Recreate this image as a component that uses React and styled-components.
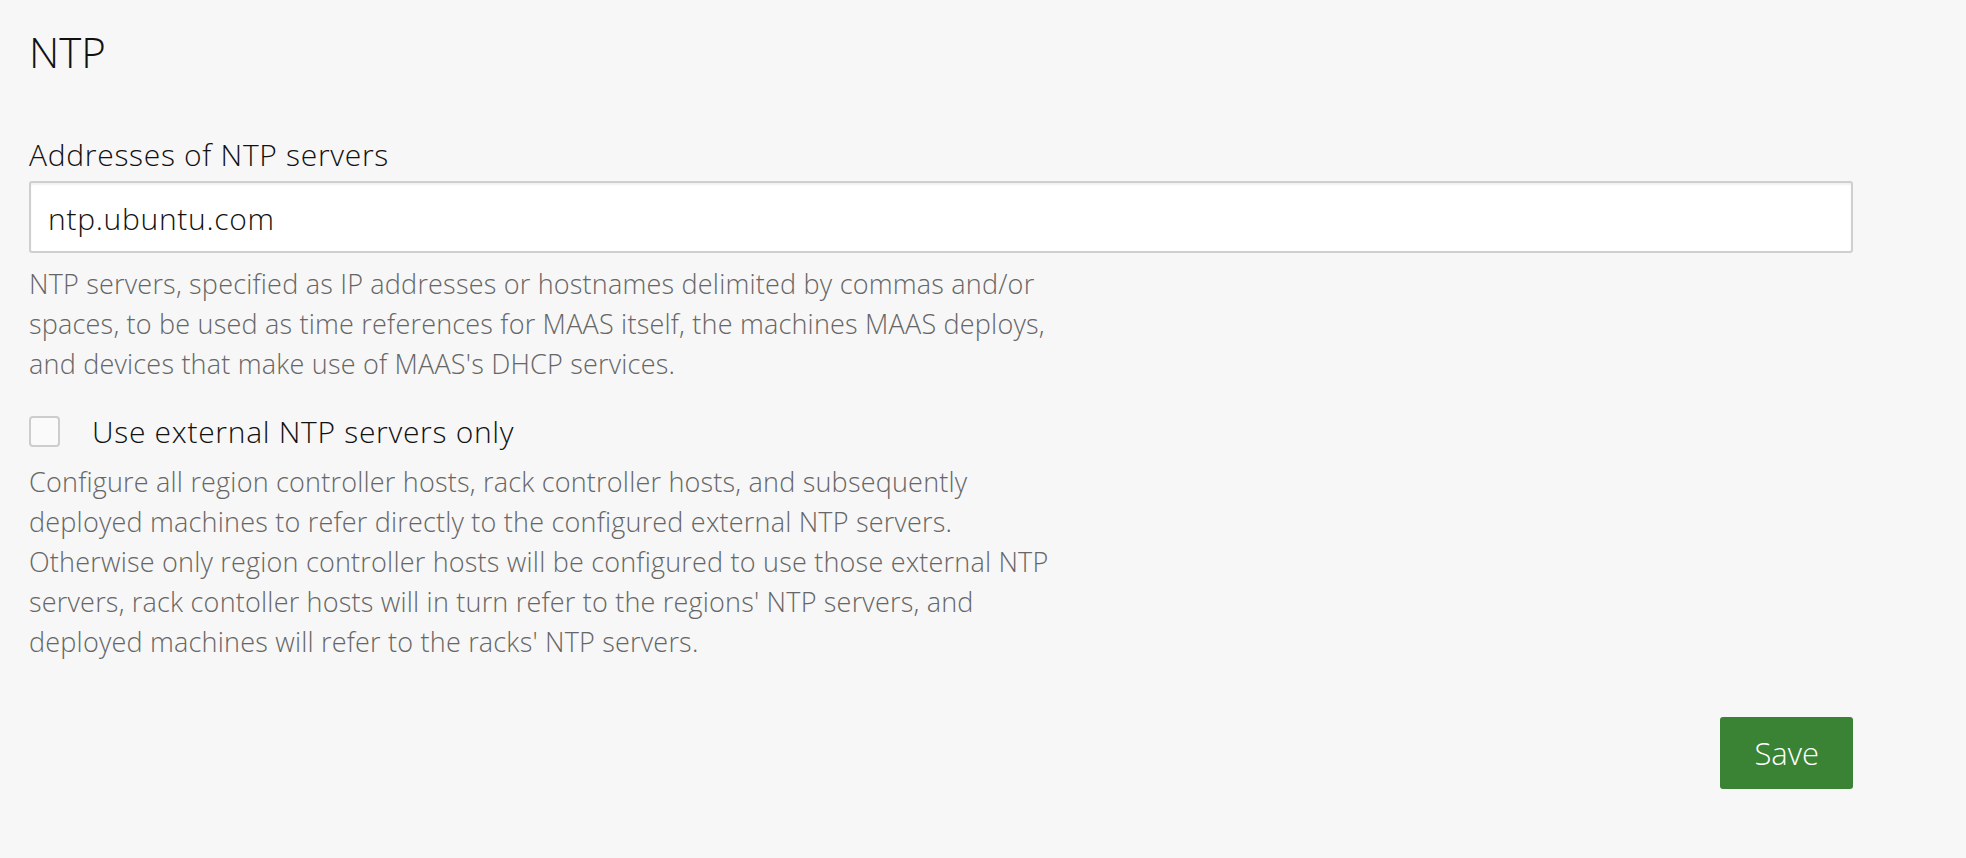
import React from "react"
import styled, { createGlobalStyle } from "styled-components"

const GlobalStyle = createGlobalStyle`
  html, body {
    margin: 0;
    padding: 0;
    background: #f7f7f7;
  }
  body {
    font-family: "Open Sans", Lato, sans-serif;
    font-weight: 300;
    color: #111;
  }
  * {
    box-sizing: border-box;
  }
`

const App = () => (
  <>
    <GlobalStyle />
    <Page>
      <Title>NTP</Title>
      <Form>
        <Label htmlFor="ntp-servers">Addresses of NTP servers</Label>
        <TextInput id="ntp-servers" type="text" defaultValue="ntp.ubuntu.com" />
        <HelpText>
          NTP servers, specified as IP addresses or hostnames delimited by commas and/or
          spaces, to be used as time references for MAAS itself, the machines MAAS deploys,
          and devices that make use of MAAS's DHCP services.
        </HelpText>

        <CheckboxRow>
          <Checkbox type="checkbox" id="external-only" />
          <CheckboxLabel htmlFor="external-only">Use external NTP servers only</CheckboxLabel>
        </CheckboxRow>
        <HelpText $tight>
          Configure all region controller hosts, rack controller hosts, and subsequently
          deployed machines to refer directly to the configured external NTP servers.
          Otherwise only region controller hosts will be configured to use those external NTP
          servers, rack contoller hosts will in turn refer to the regions' NTP servers, and
          deployed machines will refer to the racks' NTP servers.
        </HelpText>

        <Actions>
          <SaveButton type="button">Save</SaveButton>
        </Actions>
      </Form>
    </Page>
  </>
)

export default App

const Page = styled.main`
  padding: 27px 113px 40px 29px;
`

const Title = styled.h2`
  margin: 0;
  font-size: 42px;
  line-height: 50px;
  font-weight: 300;
  color: #111;
`

const Form = styled.form`
  display: flex;
  flex-direction: column;
  margin-top: 60px;
`

const Label = styled.label`
  font-size: 30px;
  line-height: 36px;
  letter-spacing: 0.7px;
  color: #111;
  margin-bottom: 8px;
`

const TextInput = styled.input`
  width: 100%;
  height: 72px;
  padding: 3px 17px 0;
  font-family: inherit;
  font-weight: 300;
  font-size: 30px;
  letter-spacing: 0.7px;
  color: #111;
  background: #fff;
  border: 2px solid #cfcfcf;
  border-radius: 3px;
  box-shadow: inset 0 2px 2px rgba(0, 0, 0, 0.06);
  outline: none;
`

const HelpText = styled.p`
  max-width: 1050px;
  margin: ${props => (props.$tight ? "15px" : "11px")} 0 0;
  font-size: 27px;
  line-height: 40px;
  letter-spacing: 0.2px;
  color: #666;
`

const CheckboxRow = styled.div`
  display: flex;
  align-items: center;
  gap: 32px;
  margin-top: 32px;
  height: 31px;
`

const Checkbox = styled.input`
  appearance: none;
  width: 31px;
  height: 31px;
  margin: 0;
  background: #fafafa;
  border: 2px solid #cdcdcd;
  border-radius: 4px;
`

const CheckboxLabel = styled.label`
  font-size: 30px;
  line-height: 36px;
  letter-spacing: 0.7px;
  padding-top: 1px;
  color: #111;
`

const Actions = styled.div`
  display: flex;
  justify-content: flex-end;
  margin-top: 55px;
`

const SaveButton = styled.button`
  height: 72px;
  padding: 0 34px;
  font-family: inherit;
  font-weight: 300;
  font-size: 31px;
  color: #fff;
  background: #3b8334;
  border: none;
  border-radius: 3px;
  cursor: pointer;
`
